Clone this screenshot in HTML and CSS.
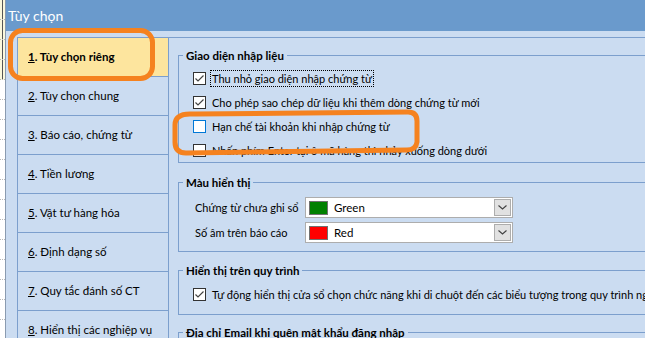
FILE: index.html
```html
<!DOCTYPE html>
<html lang="vi">
<head>
  <meta charset="UTF-8">
  <title>Tùy chọn</title>
  <link rel="stylesheet" href="styles.css">
</head>
<body>
  <div class="screen">

    <!-- sheet behind the dialog -->
    <div class="sheet">
      <div class="cell lit"></div>
      <div class="cell lit"></div>
      <div class="cell lit"></div>
      <div class="cell lit"></div>
      <div class="cell"></div>
      <div class="cell"></div>
      <div class="cell"></div>
      <div class="cell"></div>
      <div class="cell"></div>
      <div class="cell"></div>
      <div class="cell"></div>
      <div class="cell"></div>
      <div class="cell"></div>
      <div class="cell"></div>
      <div class="cell"></div>
      <div class="cell"></div>
      <div class="cell"></div>
    </div>

    <div class="dialog">
      <div class="titlebar">Tùy chọn</div>

      <div class="dialog-body">
        <ul class="tabs">
          <li class="tab active"><u>1</u>. Tùy chọn riêng</li>
          <li class="tab"><u>2</u>. Tùy chọn chung</li>
          <li class="tab"><u>3</u>. Báo cáo, chứng từ</li>
          <li class="tab"><u>4</u>. Tiền lương</li>
          <li class="tab"><u>5</u>. Vật tư hàng hóa</li>
          <li class="tab"><u>6</u>. Định dạng số</li>
          <li class="tab"><u>7</u>. Quy tắc đánh số CT</li>
          <li class="tab"><u>8</u>. Hiển thị các nghiệp vụ</li>
        </ul>

        <div class="panel">
          <fieldset class="group group-input">
            <legend>Giao diện nhập liệu</legend>
            <div class="check-row">
              <span class="box"><svg viewBox="0 0 11 11"><polyline points="1.5,5.5 4,8 9.5,2.5"/></svg></span>
              <span class="caption focused">Thu nhỏ giao diện nhập chứng từ</span>
            </div>
            <div class="check-row">
              <span class="box"><svg viewBox="0 0 11 11"><polyline points="1.5,5.5 4,8 9.5,2.5"/></svg></span>
              <span class="caption">Cho phép sao chép dữ liệu khi thêm dòng chứng từ mới</span>
            </div>
            <div class="check-row">
              <span class="box hover"></span>
              <span class="caption">Hạn chế tài khoản khi nhập chứng từ</span>
            </div>
            <div class="check-row">
              <span class="box"></span>
              <span class="caption">Nhấn phím Enter tại ô mã hàng thì nhảy xuống dòng dưới</span>
            </div>
          </fieldset>

          <fieldset class="group group-color">
            <legend>Màu hiển thị</legend>
            <div class="combo-row">
              <span class="label">Chứng từ chưa ghi sổ</span>
              <div class="combo">
                <span class="swatch green"></span>
                <span class="combo-text">Green</span>
                <span class="combo-btn"><svg viewBox="0 0 9 5"><polyline points="0.5,0.5 4.5,4 8.5,0.5"/></svg></span>
              </div>
            </div>
            <div class="combo-row">
              <span class="label">Số âm trên báo cáo</span>
              <div class="combo">
                <span class="swatch red"></span>
                <span class="combo-text">Red</span>
                <span class="combo-btn"><svg viewBox="0 0 9 5"><polyline points="0.5,0.5 4.5,4 8.5,0.5"/></svg></span>
              </div>
            </div>
          </fieldset>

          <fieldset class="group group-flow">
            <legend>Hiển thị trên quy trình</legend>
            <div class="check-row">
              <span class="box"><svg viewBox="0 0 11 11"><polyline points="1.5,5.5 4,8 9.5,2.5"/></svg></span>
              <span class="caption">Tự động hiển thị cửa sổ chọn chức năng khi di chuột đến các biểu tượng trong quy trình nghiệp vụ</span>
            </div>
          </fieldset>

          <fieldset class="group group-mail">
            <legend>Địa chỉ Email khi quên mật khẩu đăng nhập</legend>
          </fieldset>
        </div>
      </div>
    </div>

    <!-- orange marks drawn over the screenshot -->
    <svg class="marks" width="645" height="338" viewBox="0 0 645 338">
      <rect x="10.5" y="30.5" width="142" height="48" rx="12"/>
      <path d="M196 114 L408 112 Q417 112 417 121 L417 142 Q416 150 407 150 L186 153 Q175 153 175 142 L175 125 Q175 114 190 114 Z"/>
    </svg>
  </div>
</body>
</html>
```

FILE: styles.css
```css
body {
  margin: 0;
  font-family: Lato, "Liberation Sans", Arial, sans-serif;
  font-size: 11px;
  color: #000;
}

.screen {
  position: relative;
  display: flex;
  width: 645px;
  height: 338px;
  overflow: hidden;
}

/* spreadsheet strip on the left */
.sheet {
  width: 5px;
  flex-shrink: 0;
  background: #fff;
  overflow: hidden;
}

.cell {
  height: 19px;
  border-bottom: 1px dotted #b8b8b8;
}

.cell.lit {
  background: #fbf8dc;
  box-shadow: inset -2px 0 0 #fbf8dc, inset -3px 0 0 #555;
}

.dialog {
  flex: 1;
  display: flex;
  flex-direction: column;
  background: #cbdcf1;
  border-left: 1px solid #8a9bb0;
  overflow: hidden;
}

.titlebar {
  height: 31px;
  flex-shrink: 0;
  background: #6a9acc;
  color: #fff;
  font-size: 14px;
  line-height: 31px;
  padding-left: 2px;
}

.dialog-body {
  flex: 1;
  display: flex;
  padding-top: 6px;
}

/* left tab list */
.tabs {
  list-style: none;
  margin: 0 0 0 11px;
  padding: 0;
  width: 150px;
  flex-shrink: 0;
  border-left: 1px solid #7c9fcd;
  border-right: 1px solid #7c9fcd;
  border-top: 1px solid #7c9fcd;
}

.tab {
  height: 38px;
  border-bottom: 1px solid #7c9fcd;
  padding-left: 10px;
  font-size: 11.5px;
  line-height: 38px;
  white-space: nowrap;
}

.tab.active {
  background: #fde59e;
  font-weight: bold;
}

/* right panel */
.panel {
  flex: 1;
  border-top: 1px solid #7c9fcd;
  padding: 10px 0 0 9px;
  min-width: 0;
}

.group {
  margin: 0 -60px 0 0;
  padding: 0 0 0 4px;
  border: 1px solid #7c9fcd;
  min-width: 0;
}

.group legend {
  padding: 0 3px;
  font-weight: bold;
  font-size: 11.5px;
  line-height: 15px;
}

.group-input {
  padding-top: 3px;
}

.group-color {
  margin-top: 12px;
  padding-top: 5px;
  padding-bottom: 6px;
}

.group-flow {
  margin-top: 11px;
  padding-top: 4px;
  padding-bottom: 8px;
}

.group-mail {
  margin-top: 10px;
  height: 40px;
}

.check-row {
  display: flex;
  align-items: center;
  height: 24px;
  padding-left: 10px;
  white-space: nowrap;
}

.box {
  width: 11px;
  height: 11px;
  border: 1px solid #333;
  background: #fff;
  flex-shrink: 0;
  margin-right: 4px;
}

.box svg {
  display: block;
  width: 11px;
  height: 11px;
}

.box polyline {
  fill: none;
  stroke: #444;
  stroke-width: 1.2;
}

.box.hover {
  border-color: #0078d7;
}

.caption {
  padding: 1px 1px;
  border: 1px solid transparent;
}

.caption.focused {
  border: 1px dotted #000;
}

.combo-row {
  display: flex;
  align-items: center;
  height: 25px;
  padding-left: 12px;
}

.label {
  width: 110px;
  flex-shrink: 0;
  white-space: nowrap;
}

.combo {
  display: flex;
  align-items: center;
  width: 206px;
  height: 19px;
  background: #fff;
  border: 1px solid #adadad;
}

.swatch {
  width: 17px;
  height: 12px;
  margin-left: 3px;
  border: 1px solid #707070;
}

.swatch.green {
  background: #008000;
}

.swatch.red {
  background: #ff0000;
}

.combo-text {
  flex: 1;
  margin-left: 6px;
  font-size: 11.5px;
}

.combo-btn {
  display: flex;
  align-items: center;
  justify-content: center;
  width: 15px;
  height: 15px;
  margin-right: 1px;
  background: #e1e1e1;
  border: 1px solid #adadad;
}

.combo-btn svg {
  width: 9px;
  height: 5px;
}

.combo-btn polyline {
  fill: none;
  stroke: #404040;
  stroke-width: 1.1;
}

/* annotation overlay */
.marks {
  position: absolute;
  left: 0;
  top: 0;
  pointer-events: none;
}

.marks rect,
.marks path {
  fill: none;
  stroke: #f5821f;
  stroke-width: 5;
}
```
